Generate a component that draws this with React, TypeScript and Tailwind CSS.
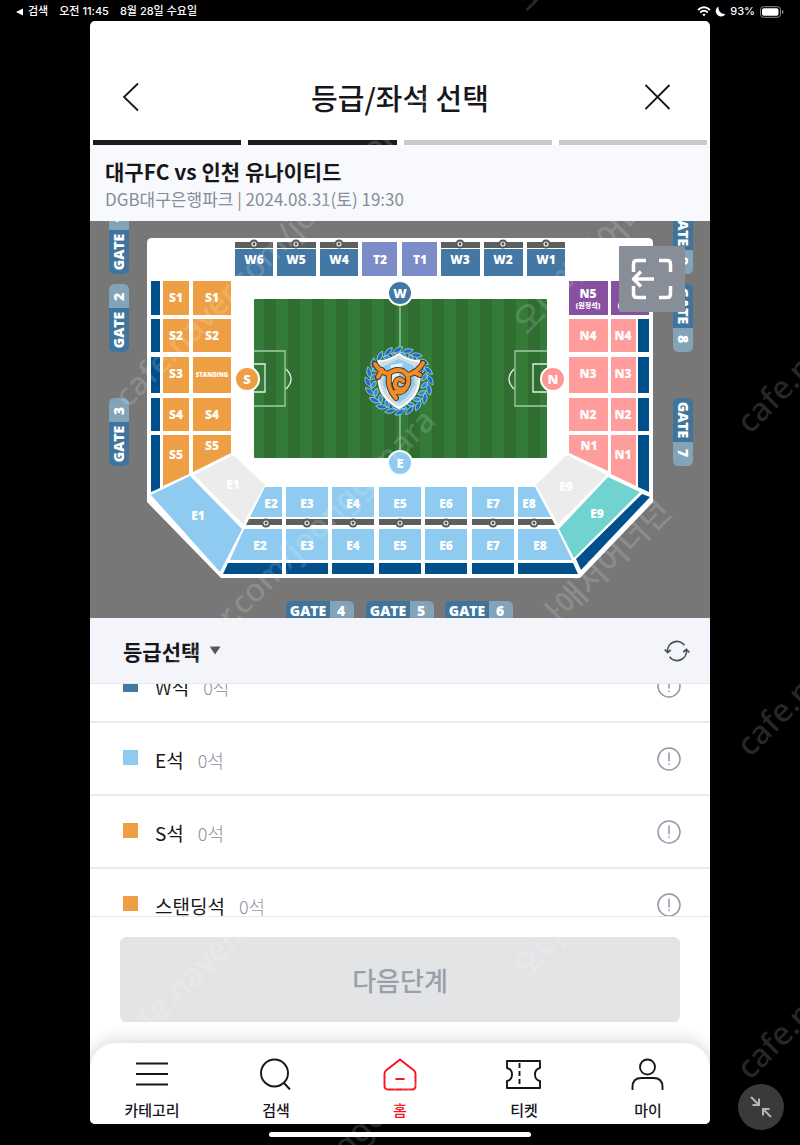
import React from "react";

const NAVY = "#00508c";
const BLUE = "#4278a3";
const SKY = "#8fcbf0";
const ORANGE = "#ee9f43";
const PINK = "#ff9c9c";
const PURPLE = "#8850a0";
const BAR = "#5c5f5e";
const VIOLET = "#7b8cc9";

function Label({ x, y, children, size = 12 }: { x: number; y: number; children: React.ReactNode; size?: number }) {
  return (
    <text x={x} y={y + size * 0.36} fontSize={size} fontWeight={800} fill="#fff" textAnchor="middle">
      {children}
    </text>
  );
}

function Gate({ x, y, n, angle }: { x: number; y: number; n: string; angle: number }) {
  return (
    <g transform={`translate(${x} ${y}) rotate(${angle})`}>
      <path d="M-28 -10H10V10H-28Q-34 10 -34 4V-4Q-34 -10 -28 -10Z" fill="#3f759c" />
      <path d="M10 -10H28Q34 -10 34 -4V4Q34 10 28 10H10Z" fill="#82a3b8" />
      <text x={-12} y={5} fontSize={14} fontWeight={800} fill="#fff" textAnchor="middle">GATE</text>
      <text x={21} y={5} fontSize={14} fontWeight={800} fill="#fff" textAnchor="middle">{n}</text>
    </g>
  );
}

function Emblem() {
  const leaves = Array.from({ length: 20 }, (_, i) => i * 18);
  const dragon =
    "M-24 -17Q-19 -9 -11 -7M-17 -11L-21 -4M24 -18Q19 -9 9 -6M15 -9L21 -6M-11 -7Q-4 -13 4 -10Q11 -6 9 3Q6 10 -1 8Q-6 5 -3 0Q0 -4 4 0M-10 -6Q-12 8 -3 17M8 5Q4 13 -4 11";
  return (
    <g transform="translate(399 381)">
      {leaves.map((a) => (
        <g key={a} transform={`rotate(${a})`} stroke="#b9ddf5" strokeWidth="0.7">
          <path d="M28 -6Q35 -4 34 4Q28 2 28 -6Z" fill="#1f6fc9" />
          <path d="M29 1Q28 8 22 7Q22 2 29 1Z" fill="#2f86da" />
        </g>
      ))}
      <path d="M-20 -20Q-10 -20 0 -27Q10 -20 20 -20Q23 6 14 16Q8 23 0 27Q-8 23 -14 16Q-23 6 -20 -20Z" fill="#cfdde6" stroke="#fff" strokeWidth="2" />
      <path d="M-15 -15L0 -22L15 -15L16 4L9 15L0 22L-10 15L-16 4Z" fill="#8fcbee" />
      <path d="M-8 -16L4 -18L-8 18L-13 9Z" fill="#e6f5fd" />
      <g fill="none" strokeLinejoin="round" strokeLinecap="round">
        <path d={dragon} stroke="#4a3825" strokeWidth="6" />
        <path d={dragon} stroke="#f28c28" strokeWidth="4" />
      </g>
    </g>
  );
}

const westBlocks = [
  { x: 235, w: 38, name: "W6" },
  { x: 277, w: 39, name: "W5" },
  { x: 320, w: 38, name: "W4" },
  { x: 441, w: 39, name: "W3" },
  { x: 484, w: 39, name: "W2" },
  { x: 527, w: 38, name: "W1" },
];
const sideRows = [
  { y: 281, h: 34 },
  { y: 319, h: 33 },
  { y: 357, h: 36 },
  { y: 398, h: 33 },
];
const eastBlocks = [
  { x: 286, name: "E3" },
  { x: 332, name: "E4" },
  { x: 379, name: "E5" },
  { x: 425, name: "E6" },
  { x: 472, name: "E7" },
];
const badges = [
  { x: 400, y: 293, name: "W", fill: BLUE },
  { x: 247, y: 379, name: "S", fill: ORANGE },
  { x: 553, y: 379, name: "N", fill: "#ff9797" },
  { x: 400, y: 463, name: "E", fill: SKY },
];

function Plug({ x, y }: { x: number; y: number }) {
  return (
    <g>
      <circle cx={x} cy={y} r="4.500" fill="#555857" />
      <circle cx={x} cy={y} r="2" fill="none" stroke="#e8e8e8" strokeWidth="1.200" />
    </g>
  );
}

function SeatMap() {
  return (
    <svg viewBox="90 221 620 397" className="block w-full font-['Open_Sans','Noto_Sans_CJK_KR',sans-serif]" role="img" aria-label="좌석 배치도">
      <rect x="90" y="221" width="620" height="397" fill="#777" />
      <path d="M152 238H648Q653 238 653 243V502L580 578H221L147 502V243Q147 238 152 238Z" fill="#fff" />

      {westBlocks.map((b) => (
        <g key={b.name}>
          <rect x={b.x} y="242" width={b.w} height="6" fill={BAR} />
          <rect x={b.x} y="249" width={b.w} height="27" fill={BLUE} />
          <Plug x={b.x + 19} y={244} />
          <Label x={b.x + 19} y={260}>{b.name}</Label>
        </g>
      ))}
      <rect x="362" y="242" width="35" height="34" fill={VIOLET} />
      <rect x="402" y="242" width="35" height="34" fill={VIOLET} />
      <Label x={380} y={260}>T2</Label>
      <Label x={420} y={260}>T1</Label>

      {sideRows.map((r, i) => (
        <g key={r.y}>
          <rect x="151" y={r.y} width="9" height={r.h} fill={NAVY} />
          <rect x="163" y={r.y} width="26" height={r.h} fill={ORANGE} />
          <rect x="193" y={r.y} width="38" height={r.h} fill={ORANGE} />
          <Label x={176} y={r.y + 17}>{`S${i + 1}`}</Label>
          {i === 2 ? <Label x={212} y={375} size={6}>STANDING</Label> : <Label x={212} y={r.y + 17}>{`S${i + 1}`}</Label>}
          {i === 0 ? (
            <>
              <rect x="569" y={r.y} width="39" height={r.h} fill={PURPLE} />
              <rect x="611" y={r.y} width="38" height={r.h} fill={PURPLE} />
              <Label x={588} y={294}>N5</Label>
              <Label x={588} y={305} size={7}>(원정석)</Label>
              <Label x={630} y={294}>N5</Label>
              <Label x={630} y={305} size={7}>(원정석)</Label>
            </>
          ) : (
            <>
              <rect x="569" y={r.y} width="39" height={r.h} fill={PINK} />
              <rect x="611" y={r.y} width="25" height={r.h} fill={PINK} />
              <rect x="638" y={r.y} width="11" height={r.h} fill={NAVY} />
              <Label x={588} y={r.y + 17}>{`N${5 - i}`}</Label>
              <Label x={623} y={r.y + 17}>{`N${5 - i}`}</Label>
            </>
          )}
        </g>
      ))}
      <path d="M151 435H160V488L151 492Z" fill={NAVY} />
      <path d="M163 435H189V474L163 486ZM193 435H231V453L193 472Z" fill={ORANGE} />
      <path d="M569 435H608V471L569 453ZM611 435H636V486L611 474Z" fill={PINK} />
      <path d="M638 435H649V492L638 487Z" fill={NAVY} />
      <Label x={176} y={455}>S5</Label>
      <Label x={212} y={446}>S5</Label>
      <Label x={589} y={446}>N1</Label>
      <Label x={623} y={455}>N1</Label>

      <path d="M194 475L233 455L265 485L243 524Z" fill="#ececed" />
      <path d="M151 495L190 476L242 529L220 572Z" fill={SKY} />
      <path d="M536 485L567 455L607 475L558 524Z" fill="#ececed" />
      <path d="M559 529L608 477L640 492L574 558Z" fill="#70d3cf" />
      <path d="M642 494L650 497L581 570L576 559Z" fill={NAVY} />
      <Label x={233} y={485}>E1</Label>
      <Label x={198} y={516}>E1</Label>
      <Label x={566} y={487}>E9</Label>
      <Label x={597} y={514}>E9</Label>

      <path d="M265 487H282V517H250ZM244 529H282V560H230ZM518 487H535L551 517H518ZM518 529H557L572 560H518Z" fill={SKY} />
      <path d="M249 519H282V525H246ZM518 519H552L555 525H518Z" fill={BAR} />
      <path d="M228 563H282V574H223ZM518 563H573L578 574H518Z" fill={NAVY} />
      <Plug x={266} y={523} />
      <Plug x={534} y={523} />
      <Label x={271} y={504}>E2</Label>
      <Label x={260} y={546}>E2</Label>
      <Label x={529} y={504}>E8</Label>
      <Label x={540} y={546}>E8</Label>
      {eastBlocks.map((b) => (
        <g key={b.name}>
          <rect x={b.x} y="487" width="42" height="30" fill={SKY} />
          <rect x={b.x} y="519" width="42" height="6" fill={BAR} />
          <rect x={b.x} y="529" width="42" height="31" fill={SKY} />
          <rect x={b.x} y="563" width="42" height="11" fill={NAVY} />
          <Plug x={b.x + 21} y={523} />
          <Label x={b.x + 21} y={504}>{b.name}</Label>
          <Label x={b.x + 21} y={546}>{b.name}</Label>
        </g>
      ))}

      <rect x="254" y="299" width="293" height="159" rx="1" fill="#357b38" />
      {Array.from({ length: 12 }, (_, i) => (
        <rect key={i} x={264 + i * 24} y="299" width="12" height="159" fill="#2f6d30" />
      ))}
      <g fill="none" stroke="#a5cba6" strokeWidth="1.300">
        <path d="M400 299V458" />
        <path d="M254 351H285V406H254M547 351H515V406H547" />
        <path d="M254 364H265V392H254M547 364H533V392H547" stroke="#e4f0e4" />
        <path d="M286 369Q296 379 286 389M514 369Q504 379 514 389" stroke="#e4f0e4" />
      </g>
      <Emblem />
      {badges.map((b) => (
        <g key={b.name}>
          <circle cx={b.x} cy={b.y} r="12" fill={b.fill} stroke="#fff" strokeWidth="2" />
          <Label x={b.x} y={b.y} size={13}>{b.name}</Label>
        </g>
      ))}

      <Gate x={119} y={240} n="1" angle={-90} />
      <Gate x={119} y={318} n="2" angle={-90} />
      <Gate x={119} y={432} n="3" angle={-90} />
      <Gate x={683} y={240} n="9" angle={90} />
      <Gate x={683} y={318} n="8" angle={90} />
      <Gate x={683} y={432} n="7" angle={90} />
      <Gate x={320} y={611} n="4" angle={0} />
      <Gate x={400} y={611} n="5" angle={0} />
      <Gate x={479} y={611} n="6" angle={0} />
    </svg>
  );
}

const grades = [
  { name: "W석", color: "bg-[#4278a3]" },
  { name: "E석", color: "bg-[#8fcbf0]" },
  { name: "S석", color: "bg-[#ee9f43]" },
  { name: "스탠딩석", color: "bg-[#ee9f43]" },
];

const tabs = [
  { label: "카테고리", icon: <path d="M4 9.500H36M4 20H36M4 30.500H36" /> },
  { label: "검색", icon: <path d="M32 19A13.500 13.500 0 1 1 5 19A13.500 13.500 0 1 1 32 19ZM28 29L34 35.500" /> },
  { label: "홈", active: true, icon: <path d="M20 5.500L34 16.500Q35.500 18 35.500 20V32Q35.500 35.500 32 35.500H8Q4.500 35.500 4.500 32V20Q4.500 18 6 16.500ZM15.500 25H24.500" /> },
  { label: "티켓", icon: <><path d="M3 7H36V14Q31 15 31 20.500T36 27V34H3V27Q8 26 8 20.500T3 14Z" /><path d="M15.500 9V32" strokeDasharray="5 3" /></> },
  { label: "마이", icon: <path d="M27 13A7.500 7.500 0 1 1 12 13A7.500 7.500 0 1 1 27 13ZM4.500 36V33Q4.500 24 13.500 24H25.500Q34.500 24 34.500 33V36" /> },
];

function Watermark() {
  return (
    <svg aria-hidden="true" className="pointer-events-none absolute inset-0 h-full w-full font-['Noto_Sans','Noto_Sans_CJK_KR',sans-serif]" fill="#fff" fillOpacity="0.16" fontSize="32" fontWeight={500}>
      {[0, 1, 2].map((r) => (
        <g key={r}>
          <text transform={`translate(128 ${409 + r * 323}) rotate(-45)`}>cafe.naver.com/joonggonara</text>
          <text transform={`translate(750 ${435 + r * 323}) rotate(-45)`}>cafe.naver.com/joonggonara</text>
        </g>
      ))}
      <text transform="translate(128 1378) rotate(-45)">cafe.naver.com/joonggonara</text>
      {[-1, 0, 1, 2].map((r) => (
        <text key={r} transform={`translate(527 ${336 + r * 323}) rotate(-45)`}>오나애저어너던</text>
      ))}
    </svg>
  );
}

export default function App() {
  return (
    <div className="relative min-h-screen overflow-hidden bg-black font-['Noto_Sans_CJK_KR',sans-serif] text-[#17171b]">
      <div className="flex h-[21px] items-center justify-between px-4 pt-[2px] font-['Inter','Noto_Sans_CJK_KR',sans-serif] text-[11px] font-medium text-white">
        <div className="flex items-center gap-[11px]">
          <span className="flex items-center gap-1">
            <svg width="8" height="8" viewBox="0 0 8 8" fill="#fff"><path d="M0 4L7 0.500V7.500Z" /></svg>
            검색
          </span>
          <span>오전 11:45</span>
          <span>8월 28일 수요일</span>
        </div>
        <div className="flex items-center gap-1">
          <svg width="14" height="11" viewBox="0 0 14 11" fill="none" stroke="#fff" strokeWidth="1.900">
            <path d="M1 4Q7 -1.500 13 4M3.200 6.500Q7 3 10.800 6.500" />
            <path d="M5.300 8.500Q7 7.200 8.700 8.500L7 10.300Z" fill="#fff" stroke="none" />
          </svg>
          <svg width="11" height="11" viewBox="0 0 11 11" fill="#fff"><path d="M3.500 0.500A5.300 5.300 0 1 0 10.500 8Q7 8.500 5 6T3.500 0.500Z" /></svg>
          <span>93%</span>
          <svg width="25" height="12" viewBox="0 0 25 12">
            <rect x="1.500" y="0.700" width="20" height="10.600" rx="3" fill="none" stroke="#8a8a8a" />
            <rect x="3" y="2.200" width="16.500" height="7.600" rx="1.800" fill="#fff" />
            <path d="M23 4V8Q24.500 7.500 24.500 6T23 4Z" fill="#8a8a8a" />
          </svg>
        </div>
      </div>

      <div className="mx-auto w-full max-w-[620px] overflow-hidden rounded-[5px] bg-white">
        <header className="grid h-[119px] grid-cols-[40px_1fr_40px] items-center px-8 pt-[33px]">
          <button type="button" aria-label="뒤로">
            <svg width="18" height="30" viewBox="0 0 18 30" fill="none" stroke="#17171b" strokeWidth="1.800"><path d="M16 1.500L2 15L16 28.500" /></svg>
          </button>
          <h1 className="text-center text-[29px] leading-[40px] font-medium">등급/좌석 선택</h1>
          <button type="button" aria-label="닫기" className="justify-self-center">
            <svg width="26" height="30" viewBox="0 0 26 30" fill="none" stroke="#17171b" strokeWidth="1.800"><path d="M0.500 3L24.500 27M24.500 3L0.500 27" /></svg>
          </button>
        </header>
        <div className="grid grid-cols-4 gap-[7px] px-[3px]">
          <span className="h-[5px] bg-[#1d1b20]" />
          <span className="h-[5px] bg-[#1d1b20]" />
          <span className="h-[5px] bg-[#c9c9c9]" />
          <span className="h-[5px] bg-[#c9c9c9]" />
        </div>
        <section className="h-[76px] bg-[#f8f9fc] px-[15px] pt-[11px]">
          <h2 className="text-[21px] leading-[30px] font-bold">대구FC vs 인천 유나이티드</h2>
          <p className="text-[17px] leading-[26px] text-[#868c99]">DGB대구은행파크 | 2024.08.31(토) 19:30</p>
        </section>

        <div className="relative">
          <SeatMap />
          <button type="button" aria-label="전체보기" className="absolute top-[25px] right-[25px] size-[66px] bg-[#878e98]">
            <svg width="66" height="66" viewBox="0 0 66 66" fill="none" stroke="#fff" strokeWidth="3.500" strokeLinejoin="round">
              <path d="M14.500 26V18Q14.500 14.500 18 14.500H27M40 14.500H48Q51.500 14.500 51.500 18V26M51.500 40V48Q51.500 51.500 48 51.500H40M27 51.500H18Q14.500 51.500 14.500 48V40M35 33H15M22 25.500L14.500 33L22 40.500" />
            </svg>
          </button>
        </div>

        <div className="flex h-[66px] items-center justify-between border-b border-[#e4e5ee] bg-[#f4f5fa] pr-5 pl-[33px]">
          <button type="button" className="flex items-center gap-[9px] text-[21px] leading-[30px] font-bold">
            등급선택
            <svg width="12" height="9" viewBox="0 0 12 9" fill="#54565c"><path d="M0.500 0.500H11.500L6 8.500Z" /></svg>
          </button>
          <button type="button" aria-label="새로고침">
            <svg width="26" height="24" viewBox="0 0 26 24" fill="none" stroke="#4c4f57" strokeWidth="1.700">
              <path d="M3.500 13A9.500 9.500 0 0 1 20.500 6.200M22.500 11A9.500 9.500 0 0 1 5.500 17.800" />
              <path d="M0.700 10.500L3.500 13.500L6.800 11M19.200 13L22.500 10.500L25.300 13.500" />
            </svg>
          </button>
        </div>

        <div className="h-[233px] overflow-hidden border-b border-[#e4e5ee]">
          <ul className="-mt-[34px]">
            {grades.map((g) => (
              <li key={g.name} className="flex h-[73px] items-center border-b-2 border-[#e9eaf1] pr-[29px] pl-[33px]">
                <span className={`mb-[2px] size-[15px] ${g.color}`} />
                <span className="mt-[3px] ml-[17px] text-[19px] leading-[28px]">{g.name}</span>
                <span className="mt-[3px] ml-[14px] text-[18px] leading-[28px] font-light text-[#8c909e]">0석</span>
                <button type="button" aria-label={`${g.name} 안내`} className="ml-auto">
                  <svg width="24" height="24" viewBox="0 0 24 24" fill="none" stroke="#9498a6" strokeWidth="1.500">
                    <circle cx="12" cy="12" r="11" />
                    <path d="M12 5.500V14.500M12 16.500V18" />
                  </svg>
                </button>
              </li>
            ))}
          </ul>
        </div>

        <div className="px-[30px] pt-5 pb-[21px]">
          <button type="button" disabled className="h-[85px] w-full rounded-[6px] bg-[#e3e4e6] text-[26px] font-medium text-[#9b9fac]">다음단계</button>
        </div>

        <nav className="grid h-[81px] grid-cols-5 rounded-t-[26px] bg-white shadow-[0_0_20px_rgba(0,0,0,0.2)]">
          {tabs.map((t) => (
            <a key={t.label} href="#" className={`flex flex-col items-center gap-[6px] pt-[11px] ${t.active ? "text-[#f5141d]" : "text-[#17171b]"}`}>
              <svg width="40" height="40" viewBox="0 0 40 40" fill="none" stroke="currentColor" strokeWidth="1.900" strokeLinejoin="round">{t.icon}</svg>
              <span className="text-[15px] leading-[20px] font-medium">{t.label}</span>
            </a>
          ))}
        </nav>
      </div>

      <div className="flex h-[21px] items-center justify-center">
        <span className="h-[5px] w-[262px] rounded-full bg-white" />
      </div>

      <Watermark />
      <button type="button" aria-label="축소" className="absolute right-4 bottom-[15px] flex size-[46px] items-center justify-center rounded-full bg-[#3a3a3b]">
        <svg width="24" height="24" viewBox="0 0 24 24" fill="none" stroke="#b5b5b5" strokeWidth="2"><path d="M2 2L10 10M10 3.500V10H3.500M22 22L14 14M14 20.500V14H20.500" /></svg>
      </button>
    </div>
  );
}
